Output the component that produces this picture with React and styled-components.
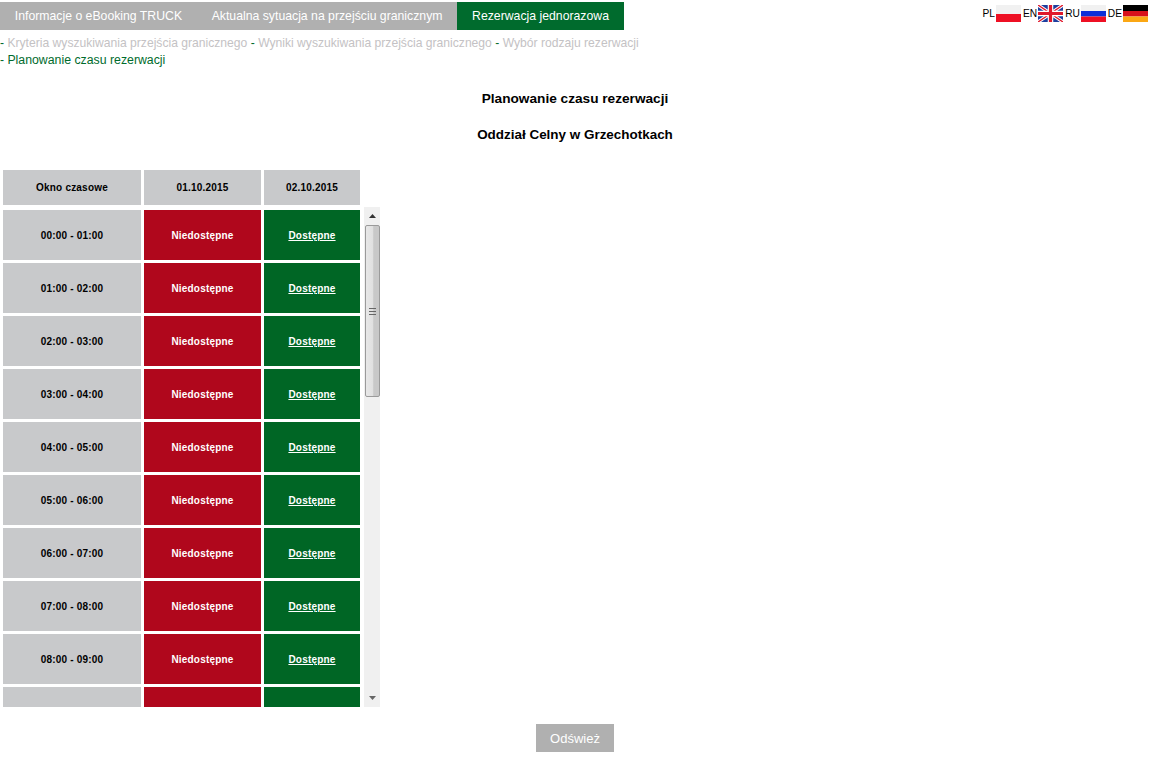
import React from "react";
import styled, { createGlobalStyle } from "styled-components";

const Global = createGlobalStyle`
  html, body { margin: 0; padding: 0; background: #fff; }
  body { font-family: "Liberation Sans", Arial, sans-serif; font-size: 12px; color: #000; }
`;

const Page = styled.div`
  width: 1150px;
  height: 757px;
  overflow: hidden;
  display: flex;
  flex-direction: column;
`;

const TopBar = styled.header`
  display: flex;
  justify-content: space-between;
  padding-top: 2px;
  height: 28px;
`;

const Tabs = styled.nav`
  display: flex;
  height: 28px;
`;

const Tab = styled.div`
  display: flex;
  align-items: center;
  height: 28px;
  padding: 0 14.8px;
  font-size: 12.25px;
  color: #fff;
  background: ${p => (p.$active ? "#006b2d" : "#b0b0b0")};
`;

const Langs = styled.div`
  display: flex;
  align-items: flex-start;
  padding: 3px 2px 0 0;
`;

const Lang = styled.div`
  display: flex;
  align-items: flex-start;
  margin-left: 2px;
  font-size: 10.2px;
  line-height: 12px;
  span { margin-top: 3px; margin-right: 1px; }
  svg { display: block; width: 25px; height: 17px; }
`;

const Crumbs = styled.div`
  margin-top: 5px;
  width: 660px;
  font-size: 12.14px;
  line-height: 17px;
  color: #006b2d;
`;

const Crumb = styled.span`
  color: ${p => (p.$current ? "#006b2d" : "#c4c2c4")};
  font-size: ${p => (p.$current ? "12.3px" : "inherit")};
`;

const Heading = styled.h2`
  margin: ${p => p.$mt}px 0 0;
  text-align: center;
  font-size: ${p => p.$size}px;
  line-height: 16px;
  font-weight: bold;
`;

const TableWrap = styled.div`
  margin: 27px 0 0 3px;
  display: flex;
  flex-direction: column;
`;

const gridCols = "138px 117px 96px";

const HeaderRow = styled.div`
  display: grid;
  grid-template-columns: ${gridCols};
  column-gap: 3px;
  height: 35px;
`;

const Cell = styled.div`
  display: flex;
  align-items: center;
  justify-content: center;
  font-size: 10px;
  font-weight: bold;
  letter-spacing: 0.2px;
  color: ${p => (p.$kind === "red" || p.$kind === "green" ? "#fff" : "#000")};
  background: ${p => ({ red: "#b0071c", green: "#006625" }[p.$kind] || "#c8c9cb")};
  a { color: inherit; text-decoration: underline; }
`;

const ScrollArea = styled.div`
  display: flex;
  height: 500px;
  margin-top: 2px;
`;

const Rows = styled.div`
  width: 357px;
  height: 500px;
  overflow: hidden;
  padding-top: 3px;
  box-sizing: border-box;
  display: flex;
  flex-direction: column;
  gap: 3px;
`;

const Row = styled.div`
  display: grid;
  grid-template-columns: ${gridCols};
  column-gap: 3px;
  height: 50px;
  flex: none;
`;

const Scrollbar = styled.div`
  width: 16px;
  margin-left: 4px;
  height: 500px;
  background: #f0f0f0;
  display: flex;
  flex-direction: column;
`;

const Arrow = styled.div`
  height: 18px;
  flex: none;
  display: flex;
  align-items: center;
  justify-content: center;
  svg { display: block; }
`;

const Thumb = styled.div`
  height: 172px;
  width: 15px;
  margin-left: 0.5px;
  box-sizing: border-box;
  border: 1px solid #9a9a9a;
  border-radius: 2px;
  background: linear-gradient(90deg, #e8e8e8 0%, #e0e0e0 50%, #c8c8c8 60%, #c8c8c8 100%);
  display: flex;
  align-items: center;
  justify-content: center;
  svg { display: block; }
`;

const Spacer = styled.div`
  flex: 1;
`;

const Footer = styled.div`
  display: flex;
  justify-content: center;
  margin-top: 17px;
`;

const Refresh = styled.button`
  width: 78px;
  height: 28px;
  border: 0;
  padding: 0;
  background: #b0b0b0;
  color: #fff;
  font-family: inherit;
  font-size: 13px;
`;

const FlagPL = () => (
  <svg viewBox="0 0 25 17">
    <rect width="25" height="9" fill="#f1f1f1" />
    <rect y="9" width="25" height="8" fill="#ee1024" />
  </svg>
);
const FlagEN = () => (
  <svg viewBox="0 0 25 17">
    <rect width="25" height="17" fill="#1f3f9e" />
    <path d="M0 0L25 17M25 0L0 17" stroke="#fff" strokeWidth="3.4" />
    <path d="M0 0L25 17M25 0L0 17" stroke="#e0182c" strokeWidth="1.4" />
    <path d="M12.5 0V17M0 8.5H25" stroke="#fff" strokeWidth="5.5" />
    <path d="M12.5 0V17M0 8.5H25" stroke="#e0182c" strokeWidth="3.2" />
  </svg>
);
const FlagRU = () => (
  <svg viewBox="0 0 25 17">
    <rect width="25" height="6" fill="#f1f1f1" />
    <rect y="6" width="25" height="5.5" fill="#0c2fd8" />
    <rect y="11.5" width="25" height="5.5" fill="#ee1024" />
  </svg>
);
const FlagDE = () => (
  <svg viewBox="0 0 25 17">
    <rect width="25" height="6" fill="#000" />
    <rect y="6" width="25" height="5.5" fill="#d8101c" />
    <rect y="11.5" width="25" height="5.5" fill="#fba714" />
  </svg>
);

const langs = [
  ["PL", FlagPL],
  ["EN", FlagEN],
  ["RU", FlagRU],
  ["DE", FlagDE],
];

const hours = Array.from({ length: 10 }, (_, i) => {
  const f = n => String(n).padStart(2, "0") + ":00";
  return `${f(i)} - ${f(i + 1)}`;
});

export default function App() {
  return (
    <Page>
      <Global />
      <TopBar>
        <Tabs>
          <Tab>Informacje o eBooking TRUCK</Tab>
          <Tab>Aktualna sytuacja na przejściu granicznym</Tab>
          <Tab $active>Rezerwacja jednorazowa</Tab>
        </Tabs>
        <Langs>
          {langs.map(([code, Flag]) => (
            <Lang key={code}>
              <span>{code}</span>
              <Flag />
            </Lang>
          ))}
        </Langs>
      </TopBar>
      <Crumbs>
        - <Crumb>Kryteria wyszukiwania przejścia granicznego</Crumb> - <Crumb>Wyniki wyszukiwania przejścia granicznego</Crumb> - <Crumb>Wybór rodzaju rezerwacji</Crumb>
        <br />- <Crumb $current>Planowanie czasu rezerwacji</Crumb>
      </Crumbs>
      <Heading $mt={22} $size={13.65}>Planowanie czasu rezerwacji</Heading>
      <Heading $mt={20} $size={13.45}>Oddział Celny w Grzechotkach</Heading>
      <TableWrap>
        <HeaderRow>
          <Cell>Okno czasowe</Cell>
          <Cell>01.10.2015</Cell>
          <Cell>02.10.2015</Cell>
        </HeaderRow>
        <ScrollArea>
          <Rows>
            {hours.map(h => (
              <Row key={h}>
                <Cell>{h}</Cell>
                <Cell $kind="red">Niedostępne</Cell>
                <Cell $kind="green">
                  <a href="#d">Dostępne</a>
                </Cell>
              </Row>
            ))}
          </Rows>
          <Scrollbar>
            <Arrow>
              <svg width="7" height="4" viewBox="0 0 7 4"><path d="M3.5 0L7 4H0Z" fill="#333" /></svg>
            </Arrow>
            <Thumb>
              <svg width="7" height="7" viewBox="0 0 7 7">
                <path d="M0 .5H7M0 3.5H7M0 6.5H7" stroke="#666" strokeWidth="1" />
              </svg>
            </Thumb>
            <Spacer />
            <Arrow>
              <svg width="7" height="4" viewBox="0 0 7 4"><path d="M0 0H7L3.5 4Z" fill="#666" /></svg>
            </Arrow>
          </Scrollbar>
        </ScrollArea>
      </TableWrap>
      <Footer>
        <Refresh>Odśwież</Refresh>
      </Footer>
    </Page>
  );
}
